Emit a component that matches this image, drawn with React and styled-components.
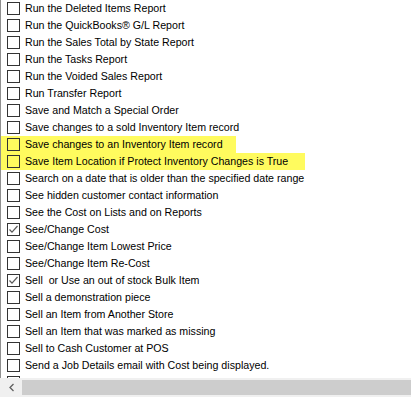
import React from "react";
import styled, { createGlobalStyle } from "styled-components";

const GlobalStyle = createGlobalStyle`
  html, body {
    margin: 0;
    padding: 0;
    background: #ffffff;
  }
  body {
    font-family: "Liberation Sans", Arial, sans-serif;
  }
`;

const Frame = styled.div`
  width: 411px;
  height: 397px;
  display: flex;
  flex-direction: column;
  overflow: hidden;
  background: #ffffff;
`;

const List = styled.div`
  flex: 1;
  overflow: hidden;
  border-left: 1px solid #8f8f8f;
  display: flex;
  flex-direction: column;
`;

const Row = styled.div`
  height: 17px;
  flex: none;
  display: flex;
  align-items: center;
  padding-left: 6px;
  width: ${(props) => (props.hl ? `${props.hl}px` : "auto")};
  background: ${(props) => (props.hl ? "#fffb5e" : "transparent")};
  box-sizing: border-box;
`;

const Box = styled.span`
  width: 13px;
  height: 13px;
  box-sizing: border-box;
  border: 1px solid #333333;
  background: transparent;
  flex: none;
  display: flex;
  align-items: center;
  justify-content: center;
`;

const Label = styled.span`
  margin-left: 5px;
  font-size: 10.65px;
  color: #000000;
  white-space: pre;
  line-height: 17px;
`;

const ScrollBar = styled.div`
  height: 19px;
  flex: none;
  display: flex;
  align-items: center;
  background: #f0f0f0;
  padding-left: 1px;
`;

const Arrow = styled.div`
  width: 21px;
  height: 17px;
  display: flex;
  align-items: center;
  justify-content: center;
  flex: none;
`;

const Thumb = styled.div`
  flex: 1;
  height: 15px;
  background: #cdcdcd;
`;

const Check = () => (
  <svg width="11" height="11" viewBox="0 0 11 11">
    <path d="M1.5 5.5 L4 8.2 L9.5 2" fill="none" stroke="#5a5a5a" strokeWidth="1.2" />
  </svg>
);

const items = [
  { t: "Run the Deleted Items Report" },
  { t: "Run the QuickBooks® G/L Report" },
  { t: "Run the Sales Total by State Report" },
  { t: "Run the Tasks Report" },
  { t: "Run the Voided Sales Report" },
  { t: "Run Transfer Report" },
  { t: "Save and Match a Special Order" },
  { t: "Save changes to a sold Inventory Item record" },
  { t: "Save changes to an Inventory Item record", hl: 235 },
  { t: "Save Item Location if Protect Inventory Changes is True", hl: 304 },
  { t: "Search on a date that is older than the specified date range" },
  { t: "See hidden customer contact information" },
  { t: "See the Cost on Lists and on Reports" },
  { t: "See/Change Cost", on: true },
  { t: "See/Change Item Lowest Price" },
  { t: "See/Change Item Re-Cost" },
  { t: "Sell  or Use an out of stock Bulk Item", on: true },
  { t: "Sell a demonstration piece" },
  { t: "Sell an Item from Another Store" },
  { t: "Sell an Item that was marked as missing" },
  { t: "Sell to Cash Customer at POS" },
  { t: "Send a Job Details email with Cost being displayed." },
  { t: "Send data to the Internet Print Usage (auto report)" },
];

export default function App() {
  return (
    <>
      <GlobalStyle />
      <Frame>
        <List>
          {items.map((it, i) => (
            <Row key={i} hl={it.hl}>
              <Box>{it.on && <Check />}</Box>
              <Label>{it.t}</Label>
            </Row>
          ))}
        </List>
        <ScrollBar>
          <Arrow>
            <svg width="8" height="9" viewBox="0 0 8 9">
              <path d="M5.5 1 L2 4.5 L5.5 8" fill="none" stroke="#606060" strokeWidth="1.3" />
            </svg>
          </Arrow>
          <Thumb />
        </ScrollBar>
      </Frame>
    </>
  );
}
